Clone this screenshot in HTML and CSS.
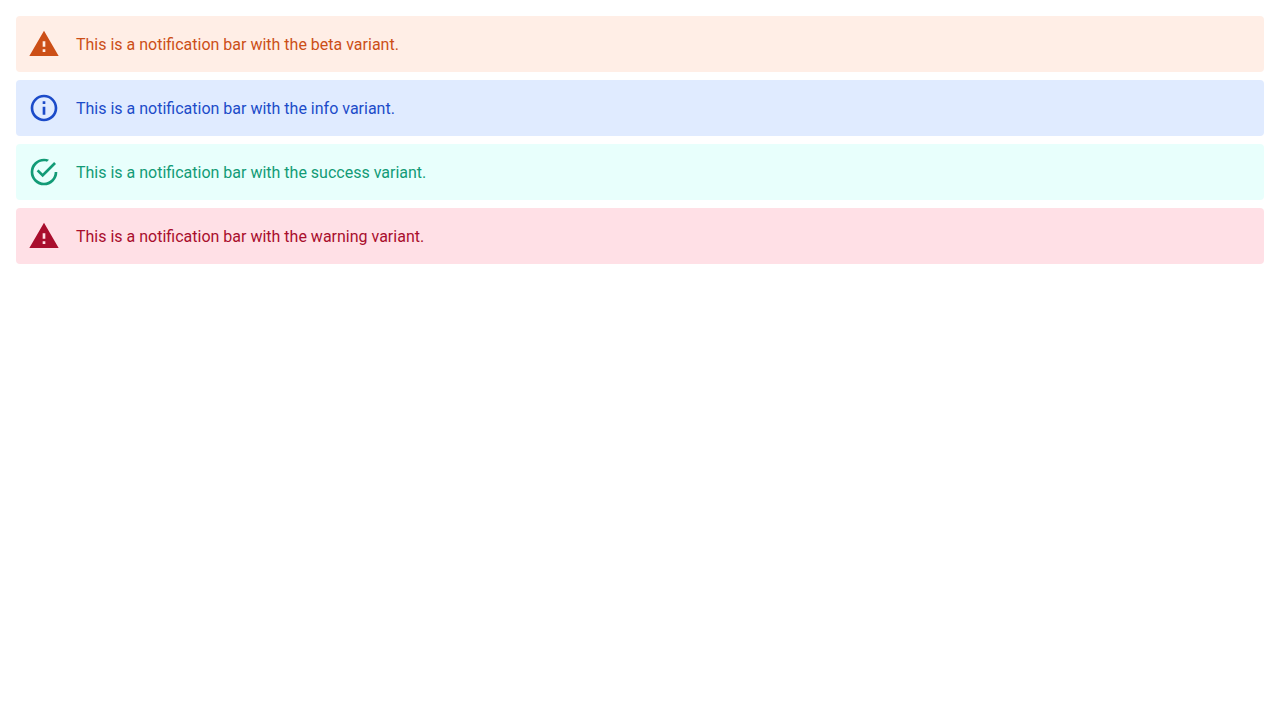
FILE: index.html
```html
<!DOCTYPE html>
<html lang="en">
<head>
<meta charset="utf-8">
<title>Notification bars</title>
<link rel="stylesheet" href="styles.css">
</head>
<body>
<main class="stack">
  <div class="bar bar-beta" role="status">
    <svg class="icon" viewBox="0 0 24 24" aria-hidden="true"><path d="M1 21h22L12 2 1 21zm12-3h-2v-2h2v2zm0-4h-2v-4h2v4z"/></svg>
    <p class="message">This is a notification bar with the beta variant.</p>
  </div>
  <div class="bar bar-info" role="status">
    <svg class="icon" viewBox="0 0 24 24" aria-hidden="true"><path d="M11 7h2v2h-2zm0 4h2v6h-2zm1-9C6.480 2 2 6.480 2 12s4.480 10 10 10 10-4.480 10-10S17.520 2 12 2zm0 18c-4.410 0-8-3.590-8-8s3.590-8 8-8 8 3.590 8 8-3.590 8-8 8z"/></svg>
    <p class="message">This is a notification bar with the info variant.</p>
  </div>
  <div class="bar bar-success" role="status">
    <svg class="icon" viewBox="0 0 24 24" aria-hidden="true"><path d="M20 12a8 8 0 0 1-8 8 8 8 0 0 1-8-8 8 8 0 0 1 8-8c.76 0 1.500.110 2.200.310l1.570-1.570A9.822 9.822 0 0 0 12 2 10 10 0 0 0 2 12a10 10 0 0 0 10 10 10 10 0 0 0 10-10M7.910 10.080L6.500 11.500 11 16 21 6l-1.410-1.420L11 13.170l-3.090-3.090z"/></svg>
    <p class="message">This is a notification bar with the success variant.</p>
  </div>
  <div class="bar bar-warning" role="alert">
    <svg class="icon" viewBox="0 0 24 24" aria-hidden="true"><path d="M1 21h22L12 2 1 21zm12-3h-2v-2h2v2zm0-4h-2v-4h2v4z"/></svg>
    <p class="message">This is a notification bar with the warning variant.</p>
  </div>
</main>
</body>
</html>
```
FILE: styles.css
```css
body {
  margin: 0;
  padding: 16px;
  background: #fff;
  font-family: Roboto, "Liberation Sans", sans-serif;
  font-size: 16px;
  line-height: 24px;
}

.stack {
  display: grid;
  gap: 8px;
}

.bar {
  display: flex;
  align-items: center;
  gap: 16px;
  padding: 12px;
  border-radius: 4px;
}

.icon {
  flex: none;
  width: 32px;
  height: 32px;
  fill: currentColor;
}

.message {
  margin: 0;
  padding-top: 2px;
}

.bar-beta {
  background: #ffeee6;
  color: #cc4f17;
}

.bar-info {
  background: #e0ebff;
  color: #1c4bc9;
}

.bar-success {
  background: #e8fffc;
  color: #129b76;
}

.bar-warning {
  background: #ffe0e6;
  color: #a90e2d;
}
```
